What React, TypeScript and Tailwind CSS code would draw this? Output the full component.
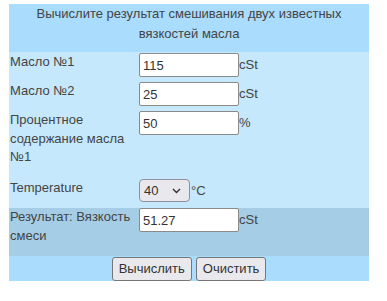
import React from 'react';

const font = { fontFamily: '"Liberation Sans", Arial, sans-serif' };

const Field = ({ value, unit }: { value: string; unit: string }) => (
  <div className="flex items-center h-[24px]">
    <input
      defaultValue={value}
      className="w-[100px] h-[24px] border border-[#8a8a8a] rounded-[2px] bg-white px-[3px] text-[13px] text-[#333] outline-none"
    />
    <span>{unit}</span>
  </div>
);

const Row = ({ label, className, children }: { label: string; className: string; children: React.ReactNode }) => (
  <div className={`flex ${className}`}>
    <div className="w-[130px] pl-[1px] leading-[18.5px]">{label}</div>
    {children}
  </div>
);

export default function App() {
  return (
    <div className="pl-[9px] pt-[4px] text-[13px] text-[#444]" style={font}>
      <div className="w-[360px] bg-[#c6e8fc]">
        <div className="h-[48px] bg-[#aadcfd] text-center leading-[20px] px-3">
          Вычислите результат смешивания двух известных вязкостей масла
        </div>
        <Row label="Масло №1" className="h-[29px] pt-[1px]">
          <Field value="115" unit="cSt" />
        </Row>
        <Row label="Масло №2" className="h-[29px] pt-[1px]">
          <Field value="25" unit="cSt" />
        </Row>
        <Row label="Процентное содержание масла №1" className="h-[68px] pt-[1px]">
          <Field value="50" unit="%" />
        </Row>
        <Row label="Temperature" className="h-[30px] pt-[1px]">
          <div className="flex items-center h-[23px]">
            <div className="relative">
              <select
                defaultValue="40"
                className="appearance-none w-[51px] h-[23px] border border-[#8f8f9d] rounded-[4px] bg-[#e9e9ed] pl-[4px] text-[13px] text-[#333] outline-none"
              >
                <option value="40">40</option>
                <option value="100">100</option>
              </select>
              <svg
                className="absolute right-[9px] top-[9px] pointer-events-none"
                width="9"
                height="6"
                viewBox="0 0 9 6"
                fill="none"
              >
                <path d="M1 1l3.5 3.5L8 1" stroke="#333" strokeWidth="1.4" />
              </svg>
            </div>
            <span className="pl-[1px]">°C</span>
          </div>
        </Row>
        <Row label="Результат: Вязкость смеси" className="h-[48px] bg-[#a6cde6]">
          <Field value="51.27" unit="cSt" />
        </Row>
        <div className="h-[25px] bg-[#aadcfd] flex justify-center items-center gap-[4px]">
          <button className="h-[24px] px-[6px] border border-[#767676] rounded-[3px] bg-[#e9e9ed] text-[#333]">
            Вычислить
          </button>
          <button className="h-[24px] px-[6px] border border-[#767676] rounded-[3px] bg-[#e9e9ed] text-[#333]">
            Очистить
          </button>
        </div>
      </div>
    </div>
  );
}
